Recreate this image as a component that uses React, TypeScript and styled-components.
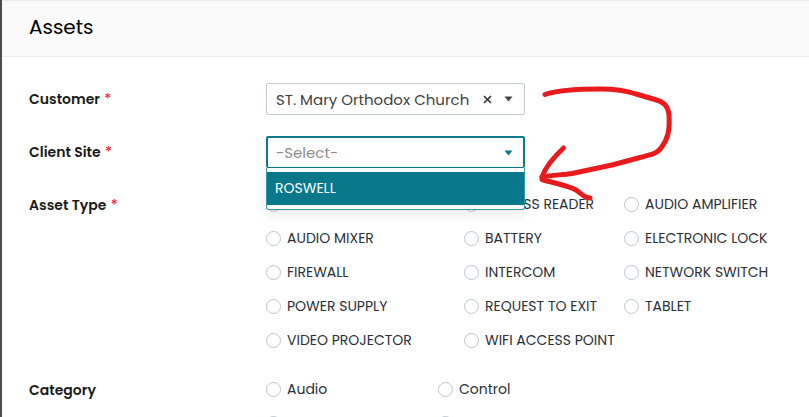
import React, { useState } from "react";
import styled, { createGlobalStyle } from "styled-components";

const GlobalStyle = createGlobalStyle`
  *, *::before, *::after { box-sizing: border-box; }
  body {
    margin: 0;
    background: #fff;
    color: #2b3038;
    font-family: Poppins, Inter, "Liberation Sans", sans-serif;
    font-size: 14px;
  }
`;

const Page = styled.div`
  position: relative;
  height: 100vh;
  overflow: hidden;
  border-left: 2px solid #4c4c4e;
`;

const Header = styled.header`
  padding: 11px 27px 14px;
  background: #fafafa;
  border-top: 1px solid #ebebeb;
  border-bottom: 1px solid #ececec;
`;

const Title = styled.h1`
  margin: 0;
  font-size: 20px;
  font-weight: 400;
  line-height: 30px;
  color: #000;
`;

const Form = styled.form`
  display: flex;
  flex-direction: column;
  gap: 21px;
  padding: 26px 27px 0;
`;

const Row = styled.div`
  display: grid;
  grid-template-columns: 237px 1fr;
`;

const FieldLabel = styled.label`
  font-size: 14px;
  font-weight: 600;
  line-height: 32px;
  color: #1a1a1a;
`;

const Star = styled.span`
  margin-left: 1px;
  font-weight: 500;
  color: #ff2b2b;
`;

const Picker = styled.div`
  position: relative;
  width: 259px;
`;

const SelectBox = styled.div<{ $open?: boolean }>`
  display: flex;
  align-items: center;
  height: 32px;
  background: #fff;
  border: ${(p) => (p.$open ? "2px solid #0a7a8a" : "1px solid #c2ccd5")};
  border-bottom-width: 1px;
  border-radius: 2px;
  padding: 0 ${(p) => (p.$open ? "10px" : "11px")} 0 ${(p) => (p.$open ? "8px" : "9px")};
`;

const Select = styled.select<{ $muted?: boolean }>`
  flex: 1;
  min-width: 0;
  height: 28px;
  padding: 0;
  appearance: none;
  border: 0;
  outline: 0;
  background: transparent;
  font: inherit;
  font-size: 15px;
  color: ${(p) => (p.$muted ? "#8d8d8d" : "#414141")};
`;

const ClearButton = styled.button`
  display: flex;
  margin: 0 12px 0 0;
  padding: 0;
  border: 0;
  background: none;
`;

const Menu = styled.ul`
  position: absolute;
  z-index: 1;
  top: 100%;
  left: 0;
  right: 0;
  margin: 0;
  padding: 4px 0;
  list-style: none;
  background: #fff;
  border: 1px solid #3596a2;
  border-top: 0;
  border-radius: 0 0 3px 3px;
  box-shadow: 0 5px 12px rgba(0, 0, 0, 0.08);
`;

const MenuItem = styled.li`
  padding: 0 8px;
  line-height: 33px;
  font-size: 14px;
  color: #fff;
  background: #08788a;
`;

const Choices = styled.div<{ $columns: string }>`
  display: grid;
  grid-template-columns: ${(p) => p.$columns};
  row-gap: 12px;
  padding-top: 4px;
`;

const Choice = styled.label`
  display: flex;
  align-items: center;
  gap: 6px;
  height: 22px;
  white-space: nowrap;
`;

const Radio = styled.input`
  flex: none;
  width: 15px;
  height: 15px;
  margin: 0;
  appearance: none;
  border: 1px solid #bcc6d0;
  border-radius: 50%;
  background: #fff;
  &:checked {
    border: 5px solid #08788a;
  }
`;

const Section = styled(Row)`
  padding-top: 2px;
`;

const Ink = styled.svg`
  position: absolute;
  z-index: 2;
  top: 80px;
  left: 528px;
  pointer-events: none;
`;

const Caret = ({ color }: { color: string }) => (
  <svg width="9" height="6" viewBox="0 0 9 6" aria-hidden="true">
    <path d="M0.5 0.5h8L4.5 5.5z" fill={color} />
  </svg>
);

const assetTypes = [
  "", "ACCESS READER", "AUDIO AMPLIFIER",
  "AUDIO MIXER", "BATTERY", "ELECTRONIC LOCK",
  "FIREWALL", "INTERCOM", "NETWORK SWITCH",
  "POWER SUPPLY", "REQUEST TO EXIT", "TABLET",
  "VIDEO PROJECTOR", "WIFI ACCESS POINT",
];

const categories = ["Audio", "Control", "", ""];

export default function App() {
  const [customer, setCustomer] = useState("mary");

  return (
    <Page>
      <GlobalStyle />
      <Header>
        <Title>Assets</Title>
      </Header>
      <Form>
        <Row>
          <FieldLabel htmlFor="customer">
            Customer <Star>*</Star>
          </FieldLabel>
          <Picker>
            <SelectBox>
              <Select id="customer" value={customer} onChange={(e) => setCustomer(e.target.value)}>
                <option value="">-Select-</option>
                <option value="mary">ST. Mary Orthodox Church</option>
              </Select>
              <ClearButton type="button" aria-label="Clear customer" onClick={() => setCustomer("")}>
                <svg width="9" height="9" viewBox="0 0 9 9" aria-hidden="true">
                  <path d="M1 1l7 7M8 1L1 8" stroke="#333" strokeWidth="1.6" />
                </svg>
              </ClearButton>
              <Caret color="#414141" />
            </SelectBox>
          </Picker>
        </Row>
        <Row>
          <FieldLabel htmlFor="site">
            Client Site <Star>*</Star>
          </FieldLabel>
          <Picker>
            <SelectBox $open>
              <Select id="site" $muted defaultValue="">
                <option value="">-Select-</option>
                <option value="roswell">ROSWELL</option>
              </Select>
              <Caret color="#08788a" />
            </SelectBox>
            <Menu role="listbox" aria-label="Client Site">
              <MenuItem role="option" aria-selected="true">ROSWELL</MenuItem>
            </Menu>
          </Picker>
        </Row>
        <Row role="radiogroup" aria-labelledby="asset-type">
          <FieldLabel as="span" id="asset-type">
            Asset Type <Star>*</Star>
          </FieldLabel>
          <Choices $columns="198px 160px 1fr">
            {assetTypes.map((name, i) => (
              <Choice key={i}>
                <Radio type="radio" name="assetType" value={i} aria-label={name || `Asset type ${i + 1}`} />
                {name}
              </Choice>
            ))}
          </Choices>
        </Row>
        <Section role="radiogroup" aria-labelledby="category">
          <FieldLabel as="span" id="category">Category</FieldLabel>
          <Choices $columns="172px 1fr">
            {categories.map((name, i) => (
              <Choice key={i}>
                <Radio type="radio" name="category" value={i} aria-label={name || `Category ${i + 1}`} />
                {name}
              </Choice>
            ))}
          </Choices>
        </Section>
      </Form>
      <Ink width="150" height="130" viewBox="530 80 150 130" fill="none" aria-hidden="true">
        <g stroke="#e81a1c" strokeWidth="5" strokeLinecap="round" strokeLinejoin="round">
          <path d="M545 94.500C558 90 582 89 600 89C616 89 626 90.500 636 94L655 99.500C664 102 668 106 669 115C670 130 668 139 661 148C657 154 650 155 640 157.500L612 165L572 173.500C562 175 552 175 542 177" />
          <path d="M563.500 148C555 156 545 168 542 177L542 179.500C553 183 567 185 576 190C582 194 584 198 590 198" />
        </g>
      </Ink>
    </Page>
  );
}
